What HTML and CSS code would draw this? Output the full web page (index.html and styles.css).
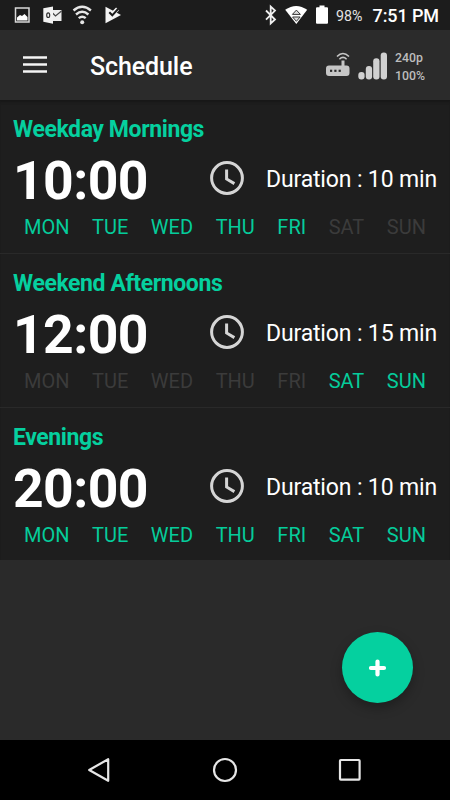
FILE: index.html
```html
<!DOCTYPE html>
<html lang="en">
<head>
<meta charset="utf-8">
<title>Schedule</title>
<link rel="stylesheet" href="styles.css">
</head>
<body>
<div class="statusbar">
  <svg class="status-icons" width="125" height="30" viewBox="0 0 125 30">
    <rect x="15.500" y="8" width="13.500" height="14" fill="#1c1c1c" stroke="#d8d8d8" stroke-width="1.500"/>
    <path d="M17 20.500v-3l3-2.500 2 1 2.500-2 3 3v3.500z" fill="#fff"/>
    <path d="M52 10h9.500v11H52z" fill="#eee"/><path d="M52 12.500l3.500 3.500 6-5" fill="none" stroke="#444" stroke-width="1.200"/>
    <path d="M43.300 8.200L53 6.400v17.400l-9.700-2z" fill="#f2f2f2"/>
    <ellipse cx="48.200" cy="15.200" rx="1.500" ry="2.300" fill="none" stroke="#333" stroke-width="1.200"/>
    <g fill="none" stroke="#e6e6e6" stroke-width="2.400"><path d="M73.500 10.500q8.700-7.500 17.400 0"/><path d="M76 14.500q6.200-5.300 12.400 0"/><path d="M78.700 18.200q3.500-3 7 0"/></g><circle cx="82.200" cy="22.300" r="2" fill="#e6e6e6"/>
    <path d="M105.500 6.800l15.500 8.200-15.500 8.200z" fill="#f4f4f4"/><path d="M112 14.500l5.500-5.500" stroke="#f4f4f4" stroke-width="4"/><path d="M109.300 12.300l3 3 5.700-6.300" fill="none" stroke="#1c1c1c" stroke-width="2"/>
  </svg>
  <svg class="system-icons" width="70" height="30" viewBox="262 0 70 30">
    <path d="M266 10.500l9 9-4.300 4V6.600l4.300 4-9 9" fill="none" stroke="#eee" stroke-width="1.800"/>
    <path d="M285.200 9.800q11-7.600 22 0L296.300 24z" fill="#fff"/>
    <path d="M292.400 14.400l4-4.300 4 4.300zM292.600 17h7.500l-3.700 4.300z" fill="#ddd" stroke="#333" stroke-width="1"/>
    <path d="M316 8.200q0-1 1-1h2.500V5.500h5v1.700h2.500q1 0 1 1v14.600q0 1-1 1h-10q-1 0-1-1z" fill="#fff"/>
  </svg>
  <span class="battery">98%</span>
  <span class="clock">7:51 PM</span>
</div>
<header class="appbar">
  <svg class="menu" width="24" height="18" viewBox="0 0 24 18"><path d="M0 1.500h24M0 8.500h24M0 15.500h24" stroke="#f5f5f5" stroke-width="2.600"/></svg>
  <h1 class="title">Schedule</h1>
  <svg class="router" width="24" height="25" viewBox="0 0 24 25">
    <path d="M3 13.500h12.500V8.500h3v5h2q3 0 3 3v4.500q0 3-3 3H3q-3 0-3-3v-4.500q0-3 3-3z" fill="#c6c6c6"/>
    <g fill="#2b2b2b"><rect x="4" y="17.700" width="2.200" height="2.200"/><rect x="8.300" y="17.700" width="2.200" height="2.200"/><rect x="12.600" y="17.700" width="2.200" height="2.200"/></g>
    <path d="M11 4.500q5.900-6 12 0M13.400 7.200q3.600-3.500 7.200 0" fill="none" stroke="#c6c6c6" stroke-width="1.600"/>
  </svg>
  <svg class="signal" width="30" height="28" viewBox="0 0 30 28"><g fill="#d0d0d0"><rect x="0.300" y="20" width="6.300" height="7.500" rx="3"/><rect x="7.800" y="14" width="6.300" height="13.500" rx="3"/><rect x="15.200" y="6.200" width="6.300" height="21.300" rx="3"/><rect x="22.700" y="0.500" width="6.300" height="27" rx="3"/></g></svg>
  <div class="quality"><span>240p</span><span>100%</span></div>
</header>
<main class="list">
  <section class="card">
    <h2 class="name">Weekday Mornings</h2>
    <div class="row"><span class="time">10:00</span>
      <svg class="dial" width="34" height="34" viewBox="0 0 34 34"><circle cx="17" cy="17" r="15.400"/><path d="M16.600 8.500v9.500l7.800 4.600"/></svg>
      <span class="duration">Duration : 10 min</span></div>
    <div class="days"><span class="on">MON</span><span class="on">TUE</span><span class="on">WED</span><span class="on">THU</span><span class="on">FRI</span><span>SAT</span><span>SUN</span></div>
  </section>
  <section class="card">
    <h2 class="name">Weekend Afternoons</h2>
    <div class="row"><span class="time">12:00</span>
      <svg class="dial" width="34" height="34" viewBox="0 0 34 34"><circle cx="17" cy="17" r="15.400"/><path d="M16.600 8.500v9.500l7.800 4.600"/></svg>
      <span class="duration">Duration : 15 min</span></div>
    <div class="days"><span>MON</span><span>TUE</span><span>WED</span><span>THU</span><span>FRI</span><span class="on">SAT</span><span class="on">SUN</span></div>
  </section>
  <section class="card">
    <h2 class="name">Evenings</h2>
    <div class="row"><span class="time">20:00</span>
      <svg class="dial" width="34" height="34" viewBox="0 0 34 34"><circle cx="17" cy="17" r="15.400"/><path d="M16.600 8.500v9.500l7.800 4.600"/></svg>
      <span class="duration">Duration : 10 min</span></div>
    <div class="days"><span class="on">MON</span><span class="on">TUE</span><span class="on">WED</span><span class="on">THU</span><span class="on">FRI</span><span class="on">SAT</span><span class="on">SUN</span></div>
  </section>
</main>
<button class="fab" aria-label="Add"><svg width="18" height="18" viewBox="0 0 18 18"><path d="M8.500 2.500v13M2 9h13" stroke="#fff" stroke-width="4.200" stroke-linecap="round"/></svg></button>
<nav class="navbar">
  <svg width="24" height="26" viewBox="0 0 24 26"><path d="M21.200 2.200v21.600L2.200 13z"/></svg>
  <svg width="26" height="26" viewBox="0 0 26 26"><circle cx="13" cy="13" r="11"/></svg>
  <svg width="24" height="24" viewBox="0 0 24 24"><rect x="2" y="2" width="19.600" height="19.600" rx="0.800"/></svg>
</nav>
</body>
</html>
```
FILE: styles.css
```css
* { box-sizing: border-box; }
body {
  margin: 0;
  width: 450px;
  height: 800px;
  display: flex;
  flex-direction: column;
  position: relative;
  overflow: hidden;
  background: #2a2a2a;
  color: #fff;
  font-family: Roboto, "Liberation Sans", sans-serif;
}
svg { display: block; flex: none; }
.statusbar {
  height: 30px;
  flex: none;
  display: flex;
  align-items: center;
  padding-right: 11px;
  background: #1c1c1c;
}
.system-icons { margin-left: 137px; }
.battery { margin-left: 4px; font-size: 14.200px; line-height: 30px; padding-top: 1px; color: #e4e4e4; }
.clock { margin-left: auto; font-size: 18px; letter-spacing: -0.100px; font-weight: 500; line-height: 30px; padding-top: 1px; white-space: nowrap; }
.appbar {
  height: 70px;
  flex: none;
  display: flex;
  align-items: center;
  padding-left: 23px;
  background: #2b2b2b;
}
.title { margin: 3px 0 0 43px; width: 236px; font-size: 25px; letter-spacing: -0.100px; line-height: 30px; font-weight: 500; }
.router { margin-top: -1px; }
.signal { margin: 1px 0 0 8px; }
.quality {
  display: flex;
  flex-direction: column;
  margin: 3px 0 0 7px;
  font-size: 12.300px;
  font-weight: 500;
  line-height: 18px;
  color: #bdbdbd;
}
.list { flex: none; height: 460px; background: #1e1e1e; box-shadow: inset 0 4px 3px -2px #171717; }
.card { height: 153.800px; border-bottom: 1.800px solid #292929; padding: 16px 13px 0; }
.card:last-child { height: 152px; border-bottom: 0; }
.name { margin: 0; font-size: 23px; letter-spacing: -0.400px; line-height: 28px; font-weight: 700; color: #05d09f; }
.row { height: 69px; display: flex; align-items: center; }
.time { width: 197px; font-size: 53.500px; letter-spacing: -0.600px; line-height: 69px; font-weight: 700; padding-top: 4px; }
.dial { margin-top: -1px; fill: none; stroke: #d5d5d5; stroke-width: 3; }
.duration { margin-left: auto; padding-top: 2px; font-size: 23px; letter-spacing: -0.150px; white-space: nowrap; }
.days {
  display: flex;
  justify-content: space-between;
  padding: 1px 11px 0;
  font-size: 20px;
  line-height: 26px;
  color: #3b3b3b;
}
.on { color: #05cc9b; }
.fab {
  position: absolute;
  left: 342px;
  top: 632px;
  width: 71px;
  height: 71px;
  padding: 0;
  border: 0;
  border-radius: 50%;
  display: flex;
  align-items: center;
  justify-content: center;
  background: #05d09f;
  box-shadow: 0 5px 12px rgba(0, 0, 0, 0.28);
}
.navbar {
  margin-top: auto;
  height: 60px;
  flex: none;
  display: flex;
  align-items: center;
  justify-content: space-between;
  padding: 0 88px 0 87px;
  background: #000;
  fill: none;
  stroke: #e6e6e6;
  stroke-width: 2.200;
  stroke-linejoin: round;
}
```
